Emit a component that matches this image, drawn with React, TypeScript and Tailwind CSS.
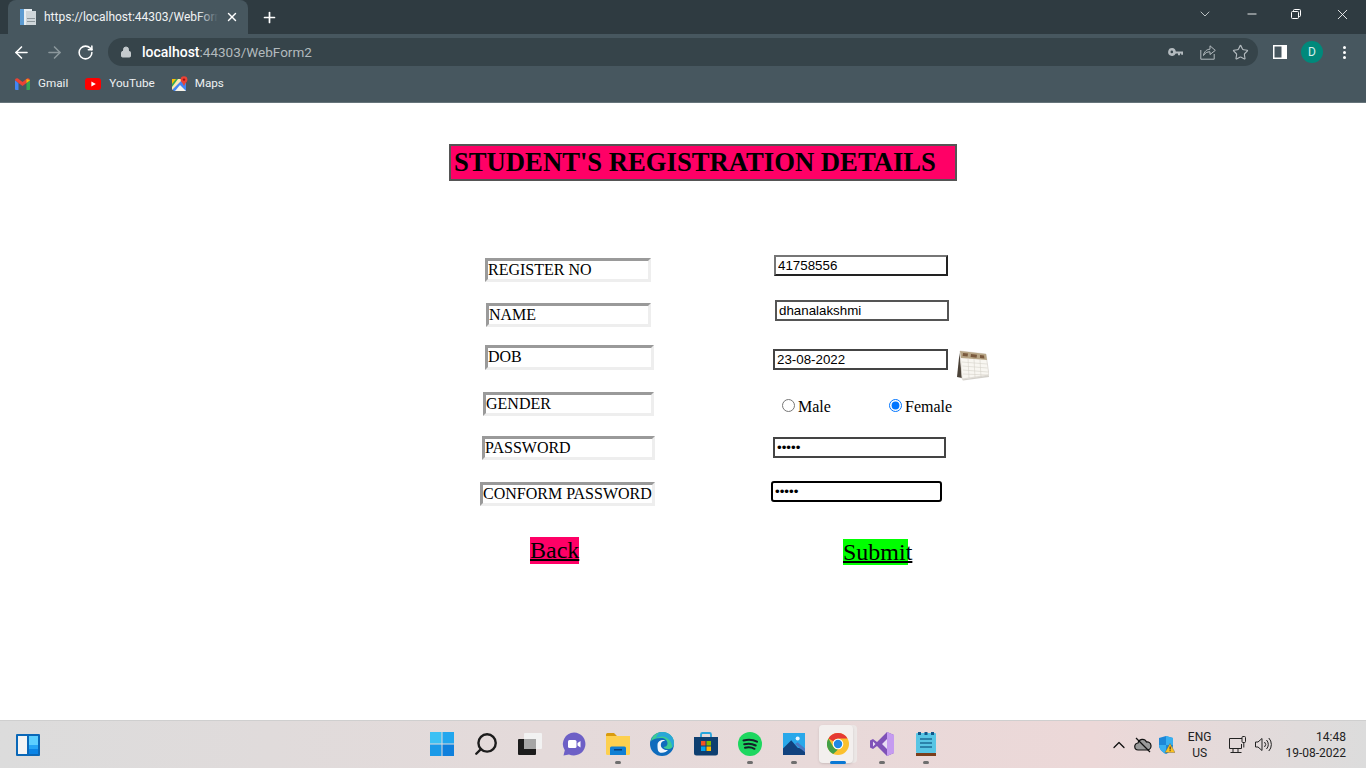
import React from 'react';
import { ArrowLeft, ArrowRight, RotateCw, Lock, Star, Search, ChevronUp, ChevronDown, Minus, X, Plus } from 'lucide-react';

const labelBox = 'border-[3px] border-t-[#9a9a9a] border-l-[#9a9a9a] border-r-[#eeeeee] border-b-[#eeeeee] bg-white text-[16px] text-black leading-[18px] whitespace-nowrap overflow-hidden';
const fieldBox = "block border-2 bg-white text-black text-[13.33px] px-[2px] outline-none font-['Liberation_Sans',Arial,sans-serif]";

const TabIcon = () => (
    <svg width="16" height="16" viewBox="0 0 16 16">
        <rect x="0" y="0" width="12" height="16" fill="#e8eef2" />
        <rect x="0" y="0" width="4" height="16" fill="#5c9bd1" />
        <rect x="6" y="2" width="10" height="14" fill="#cfd6da" />
        <rect x="7" y="9" width="8" height="1" fill="#8d979c" />
        <rect x="7" y="12" width="8" height="1" fill="#8d979c" />
    </svg>
);

const GmailIcon = () => (
    <svg width="15" height="12" viewBox="0 0 15 12">
        <path d="M0 2v9a1 1 0 0 0 1 1h2.500V5z" fill="#4285f4" />
        <path d="M15 2v9a1 1 0 0 1-1 1h-2.500V5z" fill="#34a853" />
        <path d="M0 2.200C0 .6 1.800-.4 3 .6l4.500 3.500L12 .6c1.200-1 3 0 3 1.600L11.500 5l-4 3-4-3z" fill="#ea4335" />
        <path d="M11.500 .9 15 2.200 11.500 5z" fill="#fbbc04" />
    </svg>
);

const YoutubeIcon = () => (
    <svg width="16" height="12" viewBox="0 0 16 12">
        <rect width="16" height="12" rx="3" fill="#ff0000" />
        <path d="M6.400 3.400 10.800 6l-4.400 2.600z" fill="#fff" />
    </svg>
);

const MapsIcon = () => (
    <svg width="16" height="16" viewBox="0 0 16 16">
        <path d="M0 3h10l-10 10z" fill="#34a853" />
        <path d="M0 13 10 3l4 4v8H2z" fill="#4285f4" />
        <path d="M3 15 8 9l6 6z" fill="#f7f2e7" />
        <path d="M0 3h4L0 8z" fill="#fbbc04" />
        <path d="M6 3h5L0 14v-3z" fill="#fce8b2" />
        <circle cx="12" cy="3.600" r="3.400" fill="#ea4335" />
        <path d="M9.500 5.500 12 10l2.500-4.500z" fill="#ea4335" />
        <circle cx="12" cy="3.600" r="1.200" fill="#a50e0e" />
    </svg>
);

const KeyIcon = () => (
    <svg width="16" height="16" viewBox="0 0 16 16" fill="#b4bbbf">
        <path d="M4.200 4a4 4 0 1 0 3.600 5.600H10v1.700h2V9.600h1.200v1.200H15V7.400H7.800A4 4 0 0 0 4.200 4zm-.4 2.600a1.200 1.200 0 1 1 0 2.600 1.200 1.200 0 0 1 0-2.600z" fillRule="evenodd" />
    </svg>
);

const ShareIcon = () => (
    <svg width="16" height="16" viewBox="0 0 16 16" fill="none" stroke="#b4bbbf" strokeWidth="1">
        <path d="M.8 6v9.200h13.400V10" />
        <path d="M3.500 11.500C4 7.500 7 5.200 10 5.200V1.800l5.300 4.600L10 10.500V7.800c-2.800 0-5 1-6.500 3.700z" />
    </svg>
);

const SidePanelIcon = () => (
    <svg width="14" height="14" viewBox="0 0 14 14">
        <rect width="14" height="14" fill="#fff" />
        <rect x="1.500" y="1.500" width="7" height="11" fill="#47575f" />
    </svg>
);

const RestoreIcon = () => (
    <svg width="10" height="10" viewBox="0 0 10 10" fill="none" stroke="#fff" strokeWidth="1">
        <rect x=".5" y="2.500" width="7" height="7" rx="1" />
        <path d="M2.500 2.500V1.500a1 1 0 0 1 1-1h5a1 1 0 0 1 1 1v5a1 1 0 0 1-1 1h-1" />
    </svg>
);

const CalendarPic = () => (
    <svg width="33" height="31" viewBox="0 0 33 31">
        <path d="M1 27 3.500 3 6 28z" fill="#4b4238" />
        <path d="M4 1 30 4l3 21L6 29z" fill="#f8f6f1" stroke="#c6c1b6" strokeWidth=".5" />
        <path d="M4 1 30 4l1 6L5 8z" fill="#b7a586" />
        <path d="M7 3l5 .6-.4 3-5-.6zM15 4l6 .7-.4 3-6-.7zM24 5l4 .4.4 3-4.400-.4z" fill="#7a5a3e" />
        <path d="M6 12l25 2M6.500 16l25 2M7 20l25 2M7 24l25 1M12 8l1 20M18 9l1 18.500M24 10l1 17" stroke="#d5d2c9" strokeWidth=".6" fill="none" />
        <path d="M6 29.500l27-4v1.500L7 30.500z" fill="#a8a296" opacity=".5" />
    </svg>
);

const WidgetsIcon = () => (
    <svg width="24" height="22" viewBox="0 0 24 22">
        <rect width="24" height="22" rx="1" fill="#0a68b8" />
        <rect x="2" y="2" width="9" height="18" fill="#f4f4f4" />
        <rect x="13" y="2" width="9" height="9" fill="#5ccfff" />
        <rect x="13" y="11" width="9" height="4" fill="#25a5f5" />
        <rect x="13" y="15" width="9" height="5" fill="#0a84e6" />
    </svg>
);

const StartIcon = () => (
    <svg width="24" height="24" viewBox="0 0 24 24">
        <rect x="0" y="0" width="11.500" height="11.500" fill="#3cc1f4" />
        <rect x="12.500" y="0" width="11.500" height="11.500" fill="#22a7ee" />
        <rect x="0" y="12.500" width="11.500" height="11.500" fill="#1a9ae8" />
        <rect x="12.500" y="12.500" width="11.500" height="11.500" fill="#0f80dc" />
    </svg>
);

const TaskViewIcon = () => (
    <svg width="24" height="22" viewBox="0 0 24 22">
        <rect x="6" y="0" width="18" height="16" rx="1" fill="#f2f2f2" />
        <rect x="0" y="6" width="18" height="16" rx="1" fill="#1c1c1c" />
        <rect x="6" y="6" width="12" height="10" fill="#a6a6a6" />
    </svg>
);

const ChatIcon = () => (
    <svg width="24" height="24" viewBox="0 0 24 24">
        <path d="M12 .5a11.500 11.500 0 1 1-5 21.900L1.500 23.500l1.300-5.200A11.500 11.500 0 0 1 12 .5z" fill="#6d60c6" />
        <rect x="6" y="8" width="8.500" height="8" rx="1.500" fill="#fff" />
        <path d="M15.500 11l3-2v6.500l-3-2z" fill="#fff" />
    </svg>
);

const ExplorerIcon = () => (
    <svg width="24" height="22" viewBox="0 0 24 22">
        <path d="M0 1.500A1.500 1.500 0 0 1 1.500 0h6.500l3 3h13v4H0z" fill="#d99b0e" />
        <path d="M0 3h24v17.500a1.500 1.500 0 0 1-1.500 1.500h-21A1.500 1.500 0 0 1 0 20.500z" fill="#fdd04f" />
        <path d="M4 15a1.500 1.500 0 0 1 1.500-1.500h13A1.500 1.500 0 0 1 20 15v7H4z" fill="#0f7fd4" />
        <rect x="8" y="16" width="8" height="1.500" fill="#063f7a" />
    </svg>
);

const EdgeIcon = () => (
    <svg width="24" height="24" viewBox="0 0 24 24">
        <circle cx="12" cy="12" r="12" fill="#0f6cbd" />
        <path d="M1 9C2 3.500 7 0 12 0c6.500 0 12 4.500 12 11 0 4-3 6-6 6-2.500 0-4-1-4.500-2 2 0 4-1 4-3.500C17.500 8 14.500 6 11 6 6.500 6 3 7 1 9z" fill="#3ccb94" />
        <path d="M12 0c6.500 0 12 4.500 12 11 0 2-1 3.500-2 4.500.5-5-4-11-10-11-2 0-4 .5-6 1.500C7 2 9 0 12 0z" fill="#2aa7d8" />
        <path d="M7.500 13c0-3.500 3-5 5.500-5 1.500 0 2.500.5 2.500.5S12 8.500 11 11.500c-1 3.500 2 7 7 6.500-1.500 2-6 4-9 2-1.500-1-1.500-4.500-1.500-7z" fill="#fff" opacity=".95" />
    </svg>
);

const StoreIcon = () => (
    <svg width="24" height="24" viewBox="0 0 24 24">
        <path d="M7 5V2.500A1.500 1.500 0 0 1 8.500 1h7A1.500 1.500 0 0 1 17 2.500V5" fill="none" stroke="#27a5dc" strokeWidth="1.800" />
        <path d="M0 5h24v16a2.500 2.500 0 0 1-2.500 2.500h-19A2.500 2.500 0 0 1 0 21z" fill="#0e3f70" />
        <rect x="7" y="9" width="4.500" height="4.500" fill="#f25022" />
        <rect x="12.500" y="9" width="4.500" height="4.500" fill="#7fba00" />
        <rect x="7" y="14.500" width="4.500" height="4.500" fill="#00a4ef" />
        <rect x="12.500" y="14.500" width="4.500" height="4.500" fill="#ffb900" />
    </svg>
);

const SpotifyIcon = () => (
    <svg width="24" height="24" viewBox="0 0 24 24">
        <circle cx="12" cy="12" r="12" fill="#1ed760" />
        <path d="M5.500 8.500c4.500-1.300 9.500-1 13.500 1.200M6.200 12.300c3.800-1 8-.7 11.500 1.200M7 15.800c3.200-.8 6.700-.5 9.500 1" fill="none" stroke="#14202a" strokeWidth="2" strokeLinecap="round" />
    </svg>
);

const PhotosIcon = () => (
    <svg width="22" height="22" viewBox="0 0 24 24">
        <rect width="24" height="24" fill="#29a8ea" />
        <circle cx="16" cy="6" r="2.200" fill="#e8f6ff" />
        <path d="M0 17 9 8l7 8 8 2v6H0z" fill="#11427e" />
        <path d="M13 12l3-2 8 7v4z" fill="#4a79c4" />
    </svg>
);

const ChromeIcon = () => (
    <svg width="22" height="22" viewBox="0 0 24 24">
        <circle cx="12" cy="12" r="12" fill="#fbc02d" />
        <path d="M12 0a12 12 0 0 1 10.400 6H12a6 6 0 0 0-5.200 3L1.600 6A12 12 0 0 1 12 0z" fill="#e53935" />
        <path d="M1.600 6l5.200 9a6 6 0 0 0 5.200 3l-5.200 5A12 12 0 0 1 1.600 6z" fill="#43a047" />
        <circle cx="12" cy="12" r="5.800" fill="#fff" />
        <circle cx="12" cy="12" r="4.600" fill="#1e88e5" />
    </svg>
);

const VsIcon = () => (
    <svg width="24" height="24" viewBox="0 0 24 24">
        <path d="M17 0l7 3v18l-7 3-10-10-4 3-3-1.500v-7L3 7l4 3z" fill="#7f52b8" />
        <path d="M17 0l7 3v18l-7 3z" fill="#c59bf0" />
        <path d="M17 7l-5 5 5 5zM3 9.500v5l2.500-2.500z" fill="#e8def4" />
    </svg>
);

const NotepadIcon = () => (
    <svg width="20" height="24" viewBox="0 0 20 24">
        <rect x="0" y="1" width="20" height="20" rx="1" fill="#58c5e4" />
        <rect x="2" y="0" width="3" height="3" fill="#12578a" />
        <rect x="8.500" y="0" width="3" height="3" fill="#12578a" />
        <rect x="15" y="0" width="3" height="3" fill="#12578a" />
        <path d="M4 7h12M4 11h12M4 15h12" stroke="#1c6c96" strokeWidth="1.500" />
        <rect x="0" y="21" width="20" height="3" fill="#7b3f1c" />
    </svg>
);

const CloudOffIcon = () => (
    <svg width="18" height="16" viewBox="0 0 18 16" fill="#9a9a9a" stroke="#111" strokeWidth="1.200">
        <path d="M4.500 13a3.500 3.500 0 0 1-.5-7 4.500 4.500 0 0 1 8.500-1 3.800 3.800 0 0 1 1 8z" />
        <path d="M2 1l14 14" fill="none" />
    </svg>
);

const DefenderIcon = () => (
    <svg width="16" height="18" viewBox="0 0 16 18">
        <path d="M7 0l7 2v7c0 4-3 7-7 9-4-2-7-5-7-9V2z" fill="#1d87d8" />
        <path d="M7 0l7 2v7H7zM7 9v9c-4-2-7-5-7-9z" fill="#38b0f0" />
        <path d="M11 7.500l5 9H6z" fill="#fdc21f" stroke="#3a3a3a" strokeWidth=".3" />
        <rect x="10.600" y="10.500" width="1" height="3" fill="#222" />
        <rect x="10.600" y="14.200" width="1" height="1" fill="#222" />
    </svg>
);

const NetworkIcon = () => (
    <svg width="19" height="17" viewBox="0 0 19 17" fill="none" stroke="#222" strokeWidth="1">
        <path d="M13 2.500H.5v10h12V8" />
        <path d="M4 12.500v3.500M1.500 16.500h11M9 12.500v3.500" />
        <rect x="13" y=".5" width="3.500" height="6" rx="1" />
        <path d="M14.800 6.500v5" />
    </svg>
);

const SpeakerIcon = () => (
    <svg width="17" height="15" viewBox="0 0 17 15" fill="none" stroke="#222" strokeWidth="1">
        <path d="M.5 5h2.500L7 1.500v12L3 10H.5z" />
        <path d="M9.500 5a3.500 3.500 0 0 1 0 5M11.500 3a6.500 6.500 0 0 1 0 9M13.800 1a9.500 9.500 0 0 1 0 13" />
    </svg>
);

const dock: { icon: React.ReactNode; dot?: boolean; active?: boolean }[] = [
    { icon: <StartIcon /> },
    { icon: <Search size={26} color="#1c1c1c" strokeWidth={2.2} className="-scale-x-100" /> },
    { icon: <TaskViewIcon /> },
    { icon: <ChatIcon /> },
    { icon: <ExplorerIcon />, dot: true },
    { icon: <EdgeIcon /> },
    { icon: <StoreIcon /> },
    { icon: <SpotifyIcon />, dot: true },
    { icon: <PhotosIcon />, dot: true },
    { icon: <ChromeIcon />, active: true },
    { icon: <VsIcon />, dot: true },
    { icon: <NotepadIcon />, dot: true },
];

export default function App() {
    return (
        <div className="w-[1366px] h-[768px] flex flex-col overflow-hidden bg-white font-['Roboto',sans-serif]">
            {/* Tab strip */}
            <div className="h-[34px] shrink-0 bg-[#2f3b41] flex items-stretch">
                <div className="ml-2 w-[240px] rounded-t-lg bg-[#47575f] flex items-center pl-3 pr-2 text-white">
                    <TabIcon />
                    <div className="relative ml-2 w-[174px] overflow-hidden">
                        <span className="block whitespace-nowrap text-[12px] text-[#f1f3f4]">https://localhost:44303/WebForm2</span>
                        <span className="absolute right-0 top-0 h-full w-[20px] bg-gradient-to-r from-transparent to-[#47575f]" />
                    </div>
                    <X size={14} strokeWidth={2.4} className="ml-[7px]" color="#fff" />
                </div>
                <Plus size={17} strokeWidth={2.4} color="#fff" className="ml-[13px] mt-[9px]" />
                <div className="ml-auto flex items-center text-white pb-[6px]">
                    <ChevronDown size={16} strokeWidth={1.2} color="#dfe3e5" className="mr-[32px]" />
                    <Minus size={14} strokeWidth={1.5} className="mr-[32px]" />
                    <RestoreIcon />
                    <X size={17} strokeWidth={1.2} className="ml-[33px] mr-[15px]" />
                </div>
            </div>

            {/* Toolbar */}
            <div className="h-[34px] shrink-0 bg-[#47575f] flex items-center pt-[2px]">
                <ArrowLeft size={19} strokeWidth={2} color="#fff" className="ml-[12px]" />
                <ArrowRight size={19} strokeWidth={2} color="#8b979c" className="ml-[14px]" />
                <RotateCw size={17} strokeWidth={2.2} color="#fff" className="ml-[13px]" />
                <div className="ml-[14px] w-[1150px] h-[28px] rounded-full bg-[#36444a] flex items-center pl-[12px]">
                    <Lock size={12} fill="#c4cacd" color="#c4cacd" />
                    <span className="ml-[10px] text-[14px] text-white font-medium">localhost<span className="text-[#b2babd] font-normal text-[13.500px]">:44303/WebForm2</span></span>
                    <div className="ml-auto flex items-center gap-4 pr-[9px]">
                        <KeyIcon />
                        <ShareIcon />
                        <Star size={17} strokeWidth={1.6} color="#b4bbbf" />
                    </div>
                </div>
                <div className="ml-[15px]"><SidePanelIcon /></div>
                <div className="ml-[14px] w-[22px] h-[22px] rounded-full bg-[#00897b] text-[#d5f0ec] text-[12px] flex items-center justify-center">D</div>
                <div className="ml-[20px] flex flex-col gap-[2px]">
                    <span className="w-[3px] h-[3px] bg-white rounded-full" />
                    <span className="w-[3px] h-[3px] bg-white rounded-full" />
                    <span className="w-[3px] h-[3px] bg-white rounded-full" />
                </div>
            </div>

            {/* Bookmarks */}
            <div className="h-[35px] shrink-0 bg-[#47575f] border-b border-b-[#66747a] flex items-center pb-[2px] text-[11.700px] text-[#eef1f2]">
                <div className="ml-[15px]"><GmailIcon /></div>
                <span className="ml-[8px]">Gmail</span>
                <div className="ml-[17px]"><YoutubeIcon /></div>
                <span className="ml-[8px]">YouTube</span>
                <div className="ml-[17px]"><MapsIcon /></div>
                <span className="ml-[7px]">Maps</span>
            </div>

            {/* Page */}
            <main className="flex-1 font-['Liberation_Serif','Times_New_Roman',serif] text-black">
                <h1 className="ml-[449px] mt-[41px] w-[508px] h-[37px] border-2 border-[#555555] bg-[#ff0066] text-[26.670px] font-bold leading-[33px] pl-[3px] whitespace-nowrap">STUDENT'S REGISTRATION DETAILS</h1>

                <div className="flex mt-[74px]">
                    <div className="ml-[480px] w-[291px] shrink-0 flex flex-col items-start">
                        <div className={`${labelBox} mt-[3px] ml-[5px] w-[166px] h-[24px]`}>REGISTER NO</div>
                        <div className={`${labelBox} mt-[21px] ml-[6px] w-[165px] h-[24px]`}>NAME</div>
                        <div className={`${labelBox} mt-[18px] ml-[5px] w-[169px] h-[25px]`}>DOB</div>
                        <div className={`${labelBox} mt-[22px] ml-[3px] w-[171px] h-[24px]`}>GENDER</div>
                        <div className={`${labelBox} mt-[20px] ml-[2px] w-[173px] h-[24px]`}>PASSWORD</div>
                        <div className={`${labelBox} mt-[22px] w-[175px] h-[24px]`}>CONFORM PASSWORD</div>
                        <a href="#" className="mt-[31px] ml-[50px] h-[27px] bg-[#ff0066] text-[24px] leading-[27px] text-black underline decoration-2">Back</a>
                    </div>

                    <div className="flex flex-col items-start">
                        <input readOnly value="41758556" className={`${fieldBox} ml-[3px] w-[174px] h-[21px] border-t-[#767676] border-l-[#767676] border-r-[#222222] border-b-[#222222]`} />
                        <input readOnly value="dhanalakshmi" className={`${fieldBox} mt-[24px] ml-[4px] w-[174px] h-[21px] border-[#555555]`} />
                        <div className="mt-[28px] ml-[2px] flex items-start">
                            <input readOnly value="23-08-2022" className={`${fieldBox} w-[175px] h-[21px] border-[#444444]`} />
                            <div className="ml-[8px] mt-px"><CalendarPic /></div>
                        </div>
                        <div className="mt-[17px] ml-[11px] flex items-center text-[16px] leading-[18px]">
                            <input type="radio" name="gender" readOnly className="w-[13px] h-[13px] mb-[4px]" />
                            <span className="ml-[3px] w-[91px]">Male</span>
                            <input type="radio" name="gender" defaultChecked className="w-[13px] h-[13px] mb-[4px] accent-[#0075ff]" />
                            <span className="ml-[3px]">Female</span>
                        </div>
                        <input readOnly type="password" value="12345" className={`${fieldBox} mt-[21px] ml-[2px] w-[173px] h-[21px] border-[#444444]`} />
                        <input readOnly type="password" value="12345" className={`${fieldBox} mt-[23px] w-[171px] h-[21px] border-black rounded-[3px]`} />
                        <a href="#" className="mt-[37px] ml-[72px] w-[65px] h-[26px] bg-[#00ff00] text-[24px] leading-[27px] text-black underline decoration-2 whitespace-nowrap">Submit</a>
                    </div>
                </div>
            </main>

            {/* Taskbar */}
            <div className="h-[48px] shrink-0 border-t border-t-[#cfcfcf] bg-gradient-to-r from-[#dcdcdc] via-[#ecd8d8] via-80% to-[#dcdcdc] grid grid-cols-[1fr_auto_1fr] items-center">
                <div className="pl-4"><WidgetsIcon /></div>
                <div className="flex ml-px">
                    {dock.map((d, i) => (
                        <div key={i} className="relative w-[44px] h-[47px] flex items-center justify-center pb-[2px]">
                            {d.active && <span className="absolute left-[3px] top-[4px] w-[38px] h-[38px] rounded bg-[#ece7e6]" />}
                            {d.active && <span className="absolute left-[3px] top-[4px] w-[34px] h-[38px] rounded bg-[#f3efee] shadow-sm" />}
                            <span className="relative flex">{d.icon}</span>
                            {d.dot && <span className="absolute bottom-[4px] w-[6px] h-[3px] rounded-full bg-[#6e6e6e]" />}
                            {d.active && <span className="absolute left-[14px] bottom-[4px] w-[16px] h-[3px] rounded-full bg-[#0a78d4]" />}
                        </div>
                    ))}
                </div>
                <div className="flex items-center justify-end pr-[20px] text-[#222] text-[12px]">
                    <ChevronUp size={20} strokeWidth={1.5} color="#111" className="mr-[5px]" />
                    <CloudOffIcon />
                    <div className="ml-[7px]"><DefenderIcon /></div>
                    <div className="ml-[13px] text-center leading-[16px]"><div>ENG</div><div>US</div></div>
                    <div className="ml-[18px]"><NetworkIcon /></div>
                    <div className="ml-[7px]"><SpeakerIcon /></div>
                    <div className="ml-[13px] text-right leading-[16px] text-[12px]"><div>14:48</div><div>19-08-2022</div></div>
                </div>
            </div>
        </div>
    );
}
